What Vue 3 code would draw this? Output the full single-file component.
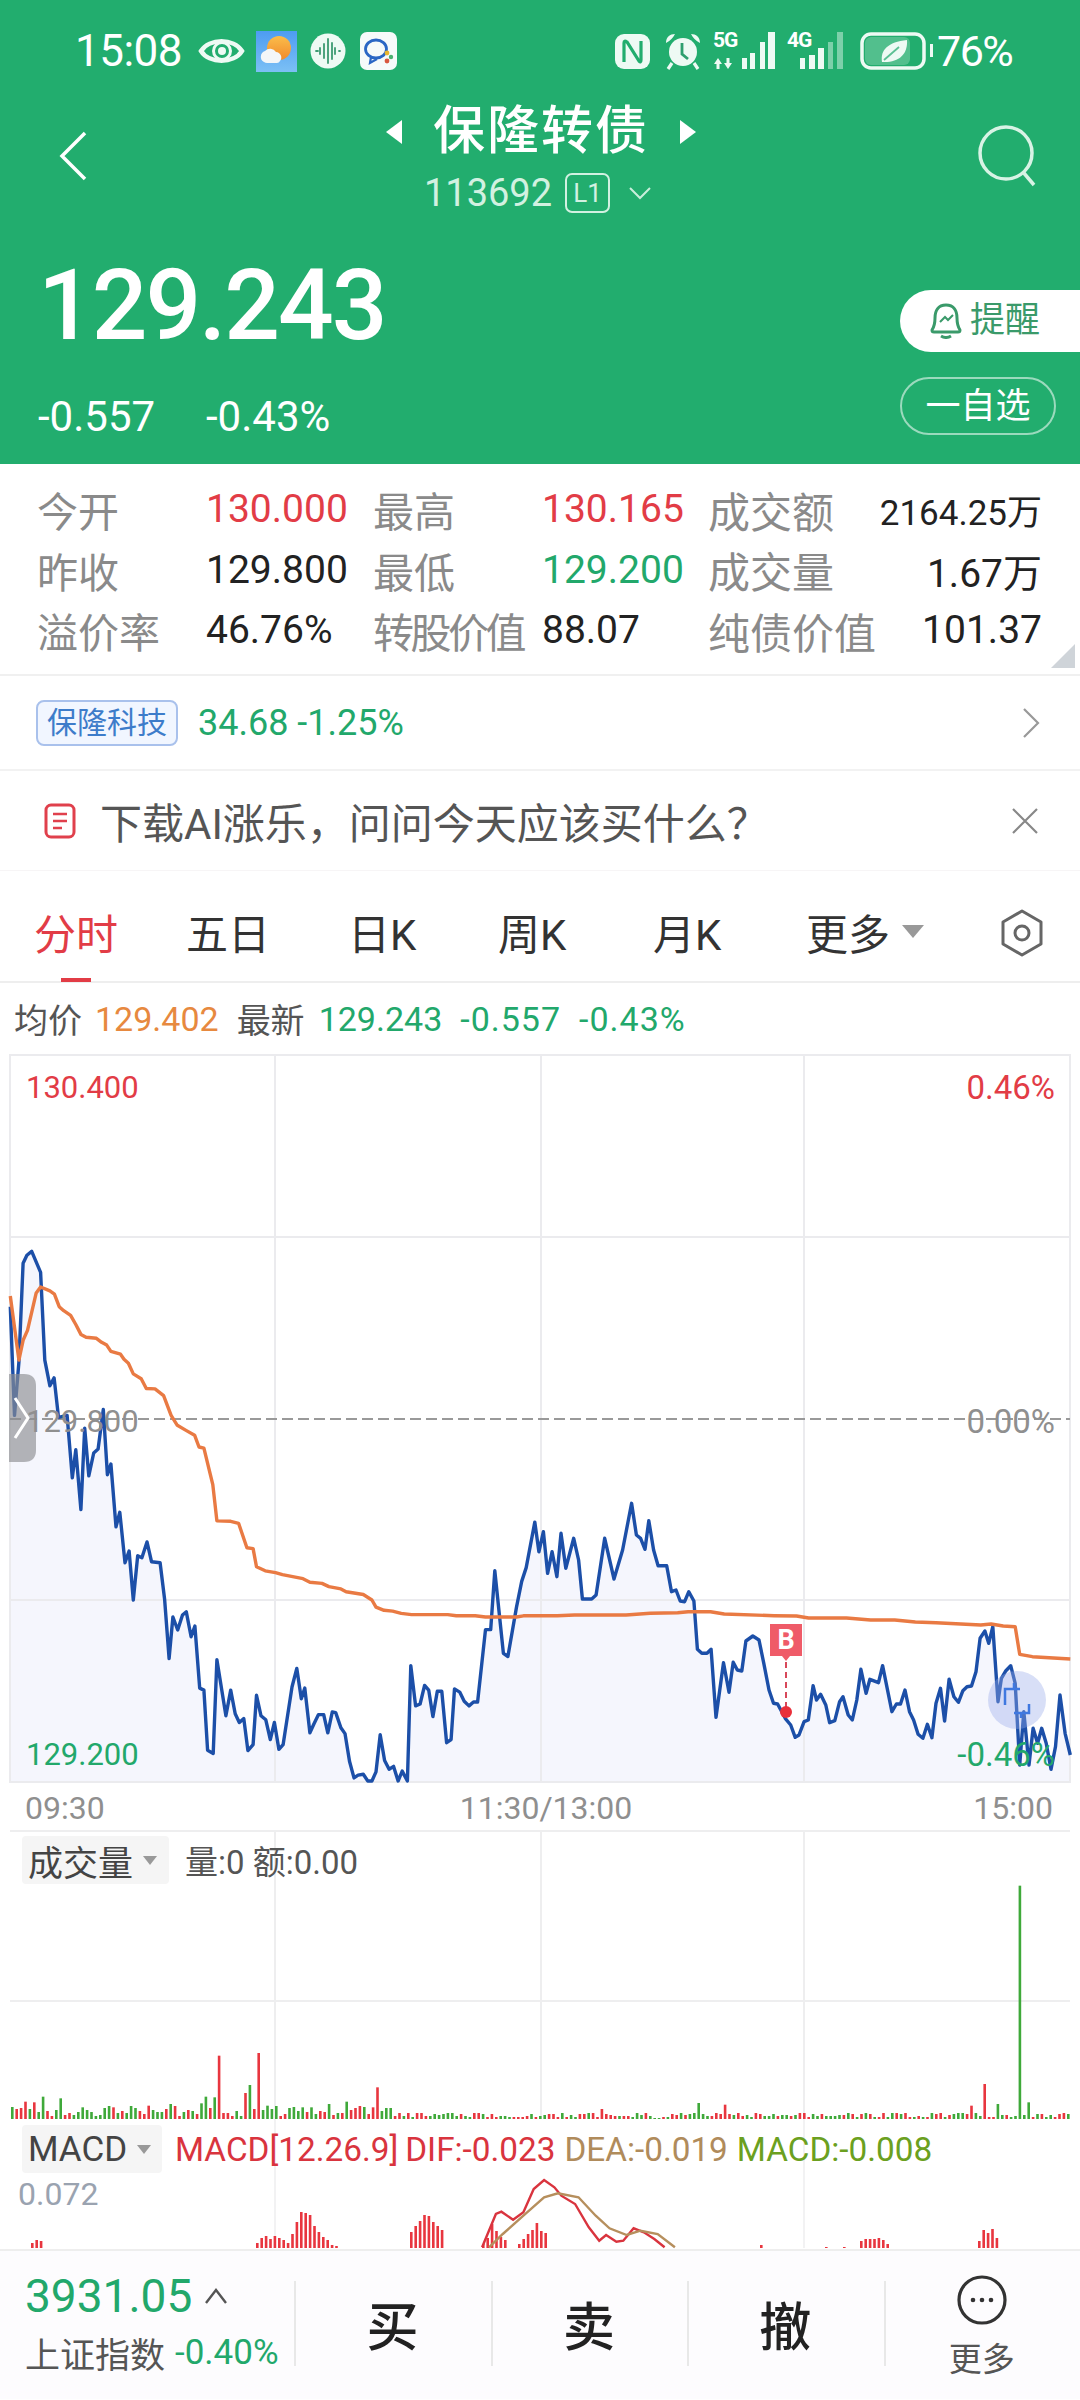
<script setup>
const blueA = [30,270,42,545,55,410,67,160,78,140,92,130,118,183,130,405,145,470,157,450,170,550,195,545,210,703,220,632,235,783,246,577,258,698,272,640,285,630,300,530,312,695,322,668,337,827,348,790,363,918,375,888,387,1012,400,900,412,905,427,865,440,915,465,918,478,1010,491,1160,502,1055,516,1088,530,1050,541,1042,555,1105,566,1078,580,1235,592,1240,603,1392,619,1400,630,1163,656,1305,670,1240,683,1300,695,1322,708,1312,720,1393,735,1378,745,1253,758,1305,772,1315,785,1365,797,1322,810,1390,822,1378,848,1232,862,1185,875,1262,885,1235,900,1348,912,1325,925,1302,940,1302,952,1348,965,1295,975,1297,990,1335,1002,1350,1015,1420,1028,1462,1040,1455,1055,1453,1068,1470,1080,1470,1092,1447,1104,1353,1117,1418,1130,1440,1143,1433,1156,1470,1168,1445,1183,1470,1193,1178,1207,1280,1220,1275,1233,1228,1245,1240,1257,1307,1270,1243,1283,1243,1297,1373,1310,1365,1320,1237,1335,1245,1348,1268,1362,1280,1375,1270,1387,1270,1410,1087,1425,1087,1437,938,1462,1147,1475,1155,1500,1030,1515,965,1528,930,1553,815,1565,890]
const blueB = [10,395,22,520,35,455,49,530,61,400,75,505,98,415,112,480,123,597,150,597,163,585,188,415,215,537,240,450,266,310,280,405,292,415,305,448,316,362,330,450,343,497,368,497,382,575,395,570,407,603,420,605,432,575,447,603,457,748,470,760,485,760,497,748,511,952,533,788,549,877,561,787,573,810,586,813,598,723,618,708,636,720,650,790,665,870,678,910,690,912,712,955,728,975,741,1012,752,1005,767,965,779,960,793,857,803,900,815,883,830,915,841,968,856,962,870,905,880,890,895,945,907,960,920,900,932,808,947,880,958,838,983,848,995,797,1022,935,1035,912,1047,912,1060,870,1073,935,1085,960,1098,1003,1112,1015,1125,973,1138,1013,1150,910,1163,865,1175,963,1188,838,1202,890,1215,907,1228,872,1240,860,1253,858,1266,815,1278,715,1292,693,1303,730,1315,680,1330,905,1340,835,1353,812,1367,797,1380,850,1393,1095,1405,935,1420,1095,1432,985,1445,1030,1457,985,1470,1030,1484,1108,1497,1040,1510,885,1525,1000,1540,1065]
const orangeA = [30,243,55,405,67,355,80,330,105,235,118,220,145,230,158,238,172,270,185,280,205,292,220,315,235,340,250,347,280,350,295,360,310,367,322,383,350,390,360,403,373,413,387,440,410,452,425,477,450,478,475,495,497,545,515,570,540,583,565,595,578,625,592,628,618,720,630,812,670,813,693,818,717,880,735,882,745,928,770,938,800,943,820,948,880,958,900,967,935,970,955,978,990,984,1005,991,1055,998,1080,1012,1092,1030,1115,1038,1140,1040,1165,1046,1195,1049,1300,1049,1325,1052,1380,1052,1410,1055,1500,1055,1520,1052,1568,1052]
const orangeB = [50,647,100,645,250,645,320,640,400,638,430,635,495,635,535,642,680,647,745,648,780,654,890,654,960,660,1030,660,1090,666,1150,668,1280,675,1310,672,1345,678,1380,680,1393,763,1430,770,1540,777]

function convert(list, sx, ox, sy, oy) {
  const out = []
  for (let i = 0; i < list.length; i += 2) {
    out.push([+(list[i] / sx + ox).toFixed(1), +(list[i + 1] / sy + oy).toFixed(1)])
  }
  return out
}
const toStr = (pts) => pts.map((p) => p.join(',')).join(' ')
const bluePts = [...convert(blueA, 2.904, 0, 2.53, 1200), ...convert(blueB, 2.904, 540, 3, 1400)]
const orangePts = [...convert(orangeA, 2.904, 0, 2.53, 1200), ...convert(orangeB, 2.904, 540, 3, 1400)]
const blueLine = toStr(bluePts)
const orangeLine = toStr(orangePts)
const blueArea = `10,1781 ${blueLine} 1070,1781`

const vols = (() => {
  const spikes = { 315:[710,'r'],373:[702,'r'],360:[798,'g'],353:[822,'r'],545:[805,'r'],1430:[795,'r'],1480:[200,'g'],1448:[855,'g'],1493:[850,'g'],950:[852,'g'],1013:[852,'g'],1050:[857,'r'],872:[870,'r'],85:[838,'g'],58:[833,'g'],32:[848,'r'],45:[850,'r'],300:[833,'g'],308:[835,'g'],290:[853,'g'],245:[855,'g'],213:[860,'r'],160:[865,'r'],117:[865,'g'],385:[860,'g'],437:[865,'g'],450:[865,'g'],476:[855,'g'],500:[848,'g'],540:[865,'r'],558:[867,'g'],1410:[860,'r'] }
  const keys = Object.keys(spikes).map((k) => [k / 1.452, spikes[k]])
  const bars = []
  let seed = 17
  for (let i = 0; i < 241; i++) {
    seed = (seed * 73 + 41) % 1009
    const x = 11 + i * 4.4
    const left = x < 390
    let h = left ? 3 + (seed % 11) : 2 + (seed % 5)
    let c = (seed >> 2) % 2 ? 'r' : 'g'
    const hit = keys.find((k) => Math.abs(k[0] - x) < 2.2)
    if (hit) { h = 2120 - (hit[1][0] / 3 + 1820); c = hit[1][1] }
    if (x > 650 && x < 660) h = 1
    bars.push({ x, y: 2120 - h, h, c: c === 'r' ? '#e8363f' : '#3fa93a' })
  }
  return bars
})()

const macdGroups = [
  [31, [5, 8, 7]],
  [256, [5, 10, 12, 9, 12, 10, 8, 5, 14, 26, 36, 35, 33, 22, 16, 11, 8, 3, 2]],
  [410, [16, 22, 27, 33, 32, 26, 22, 18]],
  [482, [4, 10, 24, 17, 11, 8]],
  [518, [4, 9, 14, 18, 25, 17, 15]],
  [860, [7, 9, 9, 9, 10, 8, 4]],
  [978, [7, 18, 15, 19, 10]],
  [760, [3]], [825, [1]], [843, [1]]
]
const macdBars = macdGroups.flatMap(([x, hs]) => hs.map((h, i) => ({ x: x + i * 4.4, h })))
const dif = toStr(convert([700,445,720,345,728,338,745,362,760,340,775,270,790,243,805,265,815,290,835,315,855,385,870,425,880,408,895,428,905,425,920,388,935,400,950,420,965,445], 1.452, 0, 3, 2100))
const dea = toStr(convert([710,445,730,405,760,350,790,295,810,283,840,295,865,350,885,388,910,408,930,395,955,405,980,445], 1.452, 0, 3, 2100))

const stats = [
  ['今开', '130.000', 'red', '最高', '130.165', 'red', '成交额', '2164.25万', 'small'],
  ['昨收', '129.800', '', '最低', '129.200', 'green', '成交量', '1.67万', ''],
  ['溢价率', '46.76%', '', '转股价值', '88.07', '', '纯债价值', '101.37', '']
]
const tabs = [
  { t: '五日', w: 162 }, { t: '日K', w: 150 }, { t: '周K', w: 155 }, { t: '月K', w: 153 }
]
</script>

<template>
  <div class="app">
    <header class="head">
      <div class="status">
        <span class="clock">15:08</span>
        <svg class="eye" width="47" height="30" viewBox="0 0 47 30"><path d="M3 15C11 2 36 2 44 15C36 28 11 28 3 15Z" fill="none" stroke="#eefaf4" stroke-width="4.5"/><circle cx="24" cy="15" r="8.5" fill="none" stroke="#eefaf4" stroke-width="3"/><circle cx="24" cy="15" r="4" fill="#eefaf4"/></svg>
        <svg class="tile1" width="41" height="41" viewBox="0 0 41 41"><defs><linearGradient id="sky" x1="0" y1="0" x2="0" y2="1"><stop offset="0" stop-color="#4d9cf2"/><stop offset="1" stop-color="#7cc0f5"/></linearGradient><linearGradient id="sun" x1="0" y1="0" x2="0" y2="1"><stop offset="0" stop-color="#fbbd4a"/><stop offset="1" stop-color="#f08a2c"/></linearGradient></defs><rect width="41" height="41" fill="url(#sky)"/><circle cx="23" cy="17" r="12" fill="url(#sun)"/><path d="M8 31a6 6 0 0 1 1-11a7 7 0 0 1 11 1a5.500 5.500 0 0 1 4 9a4 4 0 0 1-3 2H12a5 5 0 0 1-4-1Z" fill="#f3f6f8"/></svg>
        <svg class="tile2" width="36" height="36" viewBox="0 0 36 36"><circle cx="18" cy="18" r="17.500" fill="#eefaf4"/><path d="M6 18h2M10 15v6M14 11v14M18 6v24M22 10v16M25 15v6M29 18h1" stroke="#3c9a72" stroke-width="1.800" stroke-linecap="round"/></svg>
        <svg class="tile3" width="37" height="38" viewBox="0 0 37 38"><rect width="37" height="38" rx="7" fill="#f6fafa"/><ellipse cx="16" cy="17" rx="10.500" ry="9" fill="none" stroke="#2a66c4" stroke-width="2.800"/><path d="M11 25l-1 6l7-4" fill="none" stroke="#2a66c4" stroke-width="2.200"/><circle cx="27" cy="21" r="2.400" fill="#e8b630"/><circle cx="31" cy="25" r="2.200" fill="#4bb071"/><circle cx="27" cy="29" r="2.400" fill="#d9573f"/></svg>
        <div class="spacer"></div>
        <svg width="35" height="35" viewBox="0 0 35 35"><rect width="35" height="35" rx="9" fill="#eefaf4"/><path d="M9 28V9Q9 6 12 8L24 27Q26 29 26 26V7" fill="none" stroke="#22ad6e" stroke-width="3.200"/></svg>
        <svg class="alarm" width="38" height="38" viewBox="0 0 38 38"><circle cx="19" cy="20" r="14" fill="#eefaf4"/><path d="M18 11v11l6 5" fill="none" stroke="#2f9f6f" stroke-width="2.800"/><path d="M2 11C2 5 6 2 11 2Q8 8 2 11ZM36 11C36 5 32 2 27 2Q30 8 36 11Z" fill="#eefaf4"/><path d="M8 31l-4 6M30 31l4 6" stroke="#eefaf4" stroke-width="3.200"/></svg>
        <div class="sim s5">
          <span class="gen">5G</span>
          <svg width="62" height="38" viewBox="0 0 62 38"><path d="M1 32L5 26L9 32H6.500V37H3.500V32ZM11 31H13.500V26H16.500V31H19L15 37Z" fill="#eefaf4"/><rect x="29" y="26" width="5" height="11" fill="#eefaf4"/><rect x="37" y="21" width="5" height="16" fill="#eefaf4"/><rect x="47" y="10" width="5" height="27" fill="#eefaf4"/><rect x="55" y="0" width="7" height="37" fill="#eefaf4"/></svg>
        </div>
        <div class="sim s4">
          <span class="gen">4G</span>
          <svg width="56" height="38" viewBox="0 0 56 38"><rect x="13" y="26" width="5" height="11" fill="#eefaf4"/><rect x="22" y="23" width="6" height="14" fill="#eefaf4"/><rect x="31" y="16" width="6" height="21" fill="#eefaf4"/><rect x="41" y="10" width="5" height="27" fill="#eefaf4" opacity=".45"/><rect x="50" y="0" width="6" height="37" fill="#eefaf4" opacity=".45"/></svg>
        </div>
        <svg class="batt" width="73" height="38" viewBox="0 0 73 38"><rect x="2" y="2" width="62" height="34" rx="9" fill="none" stroke="#eefaf4" stroke-width="3.500"/><rect x="5" y="5" width="45" height="28" rx="6" fill="rgba(255,255,255,.22)"/><path d="M22 30C20 18 28 10 47 8C48 23 38 31 22 30Z" fill="#eefaf4"/><path d="M24 28L39 15" stroke="#5cc093" stroke-width="1.800"/><rect x="70" y="12" width="3" height="13" fill="#eefaf4"/></svg>
        <span class="pct">76%</span>
      </div>

      <div class="nav">
        <svg class="back" width="32" height="52" viewBox="0 0 32 52"><path d="M28 3L5 26L28 49" fill="none" stroke="#fff" stroke-width="3.500"/></svg>
        <div class="nav-mid">
          <div class="title-row">
            <svg width="18" height="26" viewBox="0 0 18 26"><path d="M17 1V25L1 13Z" fill="#fff"/></svg>
            <span class="title">保隆转债</span>
            <svg width="18" height="26" viewBox="0 0 18 26"><path d="M1 1V25L17 13Z" fill="#fff"/></svg>
          </div>
          <div class="code-row">
            <span class="code">113692</span>
            <span class="lv">L1</span>
            <svg width="24" height="14" viewBox="0 0 24 14"><path d="M2 2L12 12L22 2" fill="none" stroke="#c9eedb" stroke-width="2"/></svg>
          </div>
        </div>
        <svg class="search" width="62" height="62" viewBox="0 0 62 62"><circle cx="29" cy="28" r="26" fill="none" stroke="#d8f3e5" stroke-width="3.500"/><path d="M46 47L57 60" stroke="#d8f3e5" stroke-width="3.500"/></svg>
      </div>

      <div class="quote">
        <div class="quote-l">
          <div class="price">129.243</div>
          <div class="chg"><span>-0.557</span><span>-0.43%</span></div>
        </div>
        <div class="quote-r">
          <div class="pill-a">
            <svg width="32" height="36" viewBox="0 0 32 36"><path d="M16 2C8 2 5 8 5 15C5 21 4 24 2 27Q2 29 4 29H28Q30 29 30 27C28 24 27 21 27 15C27 8 24 2 16 2Z" fill="none" stroke="#3a9a6a" stroke-width="3" stroke-linejoin="round"/><path d="M11 33Q16 36 21 33" fill="none" stroke="#3a9a6a" stroke-width="3"/><path d="M10 19l5-5l3 3l5-5" fill="none" stroke="#3a9a6a" stroke-width="2"/></svg>
            <span>提醒</span>
          </div>
          <div class="pill-b">一自选</div>
        </div>
      </div>
    </header>

    <section class="stats">
      <template v-for="(r, i) in stats" :key="i">
        <span class="lb">{{ r[0] }}</span><span class="vl" :class="r[2]">{{ r[1] }}</span>
        <span class="lb" :class="{ tight: r[3].length === 4 }">{{ r[3] }}</span><span class="vl" :class="r[5]">{{ r[4] }}</span>
        <span class="lb wide">{{ r[6] }}</span><span class="vl end" :class="r[8]">{{ r[7] }}</span>
      </template>
      <i class="corner"></i>
    </section>

    <section class="related">
      <span class="tag">保隆科技</span>
      <span class="rel-val">34.68 -1.25%</span>
      <svg class="r-arrow" width="18" height="32" viewBox="0 0 18 32"><path d="M2 2L16 16L2 30" fill="none" stroke="#999" stroke-width="2.200"/></svg>
    </section>

    <section class="ai">
      <svg width="32" height="36" viewBox="0 0 32 36"><rect x="2" y="2" width="28" height="32" rx="5" fill="none" stroke="#e0404c" stroke-width="3"/><path d="M9 11H23M9 18H23M9 25H18" stroke="#e0404c" stroke-width="2.600"/></svg>
      <span class="ai-text">下载AI涨乐，问问今天应该买什么？</span>
      <svg class="ai-x" width="30" height="30" viewBox="0 0 30 30"><path d="M3 3L27 27M27 3L3 27" stroke="#888" stroke-width="2.200"/></svg>
    </section>

    <nav class="tabs">
      <span class="tab active">分时</span>
      <i class="tab-bar"></i>
      <span v-for="t in tabs" :key="t.t" class="tab" :style="{ width: t.w + 'px' }">{{ t.t }}</span>
      <span class="tab more">更多<b></b></span>
      <svg class="hex" width="44" height="48" viewBox="0 0 44 48"><path d="M22 2L41 13V35L22 46L3 35V13Z" fill="none" stroke="#666" stroke-width="3" stroke-linejoin="round"/><circle cx="22" cy="24" r="7" fill="none" stroke="#666" stroke-width="3"/></svg>
    </nav>

    <div class="avg">
      <span class="g1">均价</span><span class="or">129.402</span>
      <span class="g2">最新</span><span class="gr">129.243</span><span class="gr sp">-0.557</span><span class="gr sp">-0.43%</span>
    </div>

    <div class="main-chart">
      <svg class="fill" width="1080" height="734" viewBox="0 1052 1080 734">
        <polygon :points="blueArea" fill="#f5f6fd"/>
        <g stroke="#ebebee" stroke-width="2" fill="none">
          <rect x="10" y="1055" width="1060" height="727"/>
          <path d="M10 1237H1070M10 1600H1070M275 1055V1782M541 1055V1782M804 1055V1782"/>
        </g>
        <path d="M10 1419H1070" stroke="#999" stroke-width="2" stroke-dasharray="11 5" fill="none"/>
        <polyline :points="blueLine" fill="none" stroke="#1c4fa8" stroke-width="3.400" stroke-linejoin="round"/>
        <polyline :points="orangeLine" fill="none" stroke="#e97a43" stroke-width="3.400" stroke-linejoin="round"/>
        <circle cx="1017" cy="1700" r="29" fill="#98ace9" fill-opacity=".38"/>
        <path d="M1005 1705V1689H1020M1014 1689V1683M1029 1704V1713H1014M1021 1713V1718" fill="none" stroke="#3f78e0" stroke-width="2.500"/>
        <path d="M770 1624H802V1656H790L786 1661L782 1656H770Z" fill="#ef5b68"/>
        <path d="M786 1662V1710" stroke="#d8485a" stroke-width="2" stroke-dasharray="6 4"/>
        <circle cx="786" cy="1712" r="6" fill="#e92f3a"/>
        <path d="M9 1374H24Q36 1374 36 1386V1450Q36 1462 24 1462H9Z" fill="#8c8d92" fill-opacity=".65"/>
        <path d="M15 1398L28 1418L15 1438" fill="none" stroke="#fff" stroke-width="3"/>
      </svg>
      <span class="mark">B</span>
      <span class="cl red tl">130.400</span>
      <span class="cl red tr">0.46%</span>
      <span class="cl gray ml">129.800</span>
      <span class="cl gray mr">0.00%</span>
      <span class="cl green bl">129.200</span>
      <span class="cl green br">-0.46%</span>
    </div>

    <div class="times"><span>09:30</span><span class="t-mid">11:30/13:00</span><span>15:00</span></div>

    <div class="vol">
      <svg class="fill" width="1080" height="289" viewBox="0 1831 1080 289">
        <g stroke="#eeeeef" stroke-width="2" fill="none">
          <path d="M10 1832H1070M10 2002H1070M275 1831V2120M541 1831V2120M804 1831V2120"/>
        </g>
        <rect v-for="(b, i) in vols" :key="i" :x="b.x" :y="b.y" width="2.600" :height="b.h" :fill="b.c"/>
      </svg>
      <div class="ind-row vr">
        <span class="ind">成交量<b></b></span>
        <span class="vol-t">量:0 额:0.00</span>
      </div>
    </div>

    <div class="macd">
      <svg class="fill" width="1080" height="130" viewBox="0 2120 1080 130">
        <path d="M275 2120V2249M804 2120V2249" stroke="#eeeeef" stroke-width="1.500"/>
        <rect v-for="(b, i) in macdBars" :key="i" :x="b.x" :y="2249 - b.h" width="2.600" :height="b.h" fill="#e8363f"/>
        <polyline :points="dif" fill="none" stroke="#d9343e" stroke-width="2.400"/>
        <polyline :points="dea" fill="none" stroke="#b68f5d" stroke-width="2.400"/>
      </svg>
      <div class="ind-row mr2">
        <span class="ind ind-m">MACD<b></b></span>
        <span class="m1">MACD[12.26.9]</span>
        <span class="m1 m1b">DIF:-0.023</span>
        <span class="m2">DEA:-0.019</span>
        <span class="m3">MACD:-0.008</span>
      </div>
      <span class="scale">0.072</span>
    </div>

    <footer class="foot">
      <div class="idx">
        <div class="idx-top"><span class="idx-num">3931.05</span><svg width="24" height="16" viewBox="0 0 24 16"><path d="M2 15L12 2L22 15" fill="none" stroke="#555" stroke-width="2.400"/></svg></div>
        <div class="idx-bot"><span class="idx-name">上证指数</span><span class="idx-pct">-0.40%</span></div>
      </div>
      <div class="act">买</div>
      <div class="act">卖</div>
      <div class="act">撤</div>
      <div class="act act-more">
        <svg width="50" height="50" viewBox="0 0 50 50"><circle cx="25" cy="25" r="23" fill="none" stroke="#333" stroke-width="3.200"/><circle cx="16" cy="25" r="2.300" fill="#333"/><circle cx="25" cy="25" r="2.300" fill="#333"/><circle cx="34" cy="25" r="2.300" fill="#333"/></svg>
        <span>更多</span>
      </div>
    </footer>
  </div>
</template>

<style scoped>
.app {
  width: 1080px;
  height: 2400px;
  overflow: hidden;
  background: #fff;
  color: #222;
  font-family: Roboto, "Noto Sans CJK SC", sans-serif;
}
.head { height: 464px; background: #22ad6e; color: #fff; }
.status { height: 102px; display: flex; align-items: center; padding: 0 68px 0 75px; box-sizing: border-box; }
.clock { width: 110px; font-size: 44px; letter-spacing: -.5px; white-space: nowrap; }
.eye { margin-left: 13px; }
.tile1 { margin-left: 11px; }
.tile2 { margin-left: 13px; }
.tile3 { margin-left: 14px; }
.spacer { flex: 1; }
.alarm { margin-left: 14px; }
.sim { position: relative; height: 38px; }
.sim svg { display: block; }
.s5 { margin-left: 11px; width: 62px; }
.s4 { margin-left: 12px; width: 56px; }
.gen { position: absolute; left: 0; top: -2px; font-size: 21px; line-height: 20px; font-weight: 700; letter-spacing: -1px; }
.batt { margin-left: 17px; }
.pct { margin-left: 4px; width: 75px; font-size: 43px; letter-spacing: -1.500px; white-space: nowrap; }

.nav { height: 118px; display: flex; align-items: flex-start; position: relative; padding: 0 41px 0 57px; }
.back { margin-top: 28px; }
.nav-mid { flex: 1; display: flex; flex-direction: column; align-items: center; padding-left: 16px; }
.title-row { display: flex; align-items: center; gap: 30px; height: 60px; }
.title { font-size: 52px; line-height: 60px; letter-spacing: 2px; font-weight: 500; }
.code-row { display: flex; align-items: center; height: 44px; margin-top: 9px; margin-left: -6px; }
.code { font-size: 38px; color: #d2f1e1; }
.lv { margin-left: 13px; width: 45px; height: 40px; line-height: 36px; text-align: center; box-sizing: border-box; border: 2px solid #d2f1e1; border-radius: 7px; font-size: 26px; color: #d2f1e1; }
.code-row svg { margin-left: 18px; }
.search { margin-top: 23px; }

.quote { display: flex; justify-content: space-between; height: 244px; }
.quote-l { padding-left: 38px; }
.price { margin-top: 37px; font-size: 98px; line-height: 98px; letter-spacing: -2px; font-weight: 500; }
.chg { margin-top: 42px; display: flex; font-size: 42px; line-height: 40px; }
.chg span:first-child { width: 168px; }
.quote-r { width: 180px; padding-top: 70px; }
.pill-a { height: 62px; display: flex; align-items: center; padding-left: 30px; gap: 8px; background: #fff; border-radius: 31px 0 0 31px; color: #3a9a6a; font-size: 35px; line-height: 56px; box-sizing: border-box; }
.pill-b { margin-top: 25px; width: 156px; height: 58px; line-height: 56px; box-sizing: border-box; text-align: center; border: 2px solid rgba(255,255,255,.55); border-radius: 29px; font-size: 35px; }

.stats { position: relative; height: 212px; box-sizing: border-box; padding: 15px 38px 0 37px; display: grid; grid-template-columns: 169px 167px 169px 166px 150px 1fr; grid-auto-rows: 60.5px; align-items: center; border-bottom: 2px solid #f0f0f0; }
.lb { font-size: 41px; color: #8a8a8a; white-space: nowrap; }
.lb.wide { font-size: 42px; }
.lb.tight { letter-spacing: -3.500px; }
.vl { font-size: 39px; color: #222; white-space: nowrap; }
.vl.end { text-align: right; }
.vl.small { font-size: 35px; }
.red { color: #e23c46; }
.green { color: #22a86b; }
.gray { color: #8f8f8f; }
.corner { position: absolute; right: 5px; bottom: 6px; width: 0; height: 0; border-style: solid; border-width: 0 0 24px 24px; border-color: transparent transparent #cfd4d9 transparent; }

.related { height: 95px; display: flex; align-items: center; padding: 0 40px 0 36px; box-sizing: border-box; border-bottom: 2px solid #f2f2f2; }
.tag { width: 142px; height: 46px; line-height: 42px; box-sizing: border-box; text-align: center; border: 2px solid #a9c1ec; border-radius: 8px; background: #f1f6ff; color: #3d7cca; font-size: 30px; }
.rel-val { margin-left: 20px; color: #22a86b; font-size: 36px; }
.r-arrow { margin-left: auto; }

.ai { height: 100px; display: flex; align-items: center; padding: 0 40px 0 44px; box-sizing: border-box; border-bottom: 1px solid #f7f5f6; }
.ai-text { margin-left: 24px; font-size: 42px; color: #555; white-space: nowrap; }
.ai-x { margin-left: auto; }

.tabs { height: 112px; display: flex; align-items: center; padding: 10px 0 0 34px; box-sizing: border-box; border-bottom: 2px solid #eee; position: relative; }
.tab { font-size: 42px; color: #333; white-space: nowrap; }
.tab.active { width: 152px; color: #e23c46; }
.tab-bar { position: absolute; left: 61px; bottom: -1px; width: 30px; height: 4px; background: #e23c46; }
.tab.more { display: flex; align-items: center; }
.tab.more b { margin-left: 12px; width: 0; height: 0; border-left: 11px solid transparent; border-right: 11px solid transparent; border-top: 13px solid #999; }
.hex { position: absolute; left: 1000px; top: 38px; }

.avg { height: 71px; display: flex; align-items: center; padding-left: 14px; font-size: 34px; }
.g1, .g2 { color: #555; }
.or { margin-left: 13px; color: #e7893f; }
.g2 { margin-left: 18px; }
.gr { margin-left: 14px; color: #22a86b; }
.gr.sp { margin-left: 18px; letter-spacing: 1px; }

.main-chart { position: relative; height: 726px; }
.fill { position: absolute; left: 0; top: -2px; }
.vol .fill, .macd .fill { top: 0; }
.mark { position: absolute; left: 770px; top: 569px; width: 32px; text-align: center; font-size: 27px; line-height: 34px; color: #fff; font-weight: 700; }
.cl { position: absolute; font-size: 31px; line-height: 38px; white-space: nowrap; }
.tl { left: 26px; top: 15px; }
.tr { right: 25px; top: 15px; font-size: 33px; }
.ml { left: 26px; top: 349px; }
.mr { right: 25px; top: 349px; font-size: 33px; }
.bl { left: 26px; top: 682px; }
.br { right: 25px; top: 682px; font-size: 33px; }

.times { height: 50px; display: flex; justify-content: space-between; align-items: center; padding: 5px 27px 0 25px; font-size: 32px; color: #8f8f8f; box-sizing: border-box; }
.t-mid { margin-left: 14px; }

.vol { position: relative; height: 289px; }
.macd { position: relative; height: 130px; }
.ind-row { position: absolute; left: 22px; display: flex; align-items: center; white-space: nowrap; }
.vr { top: 6px; }
.mr2 { top: 6px; }
.ind { width: 147px; height: 48px; display: flex; align-items: center; padding-left: 6px; box-sizing: border-box; background: #f5f5f5; border-radius: 4px; font-size: 35px; color: #444; }
.ind-m { width: 140px; }
.ind b { margin-left: 10px; width: 0; height: 0; border-left: 7px solid transparent; border-right: 7px solid transparent; border-top: 9px solid #999; }
.vol-t { margin-left: 16px; font-size: 33px; color: #555; }
.m1, .m2, .m3 { font-size: 33.300px; margin-left: 9px; }
.m1 { color: #d9343e; }
.m1b { margin-left: 7px; }
.m2 { color: #b08b5b; }
.m3 { color: #6ba020; }
.mr2 .m1:nth-child(2) { margin-left: 13px; }
.scale { position: absolute; left: 18px; top: 56px; font-size: 32px; line-height: 38px; color: #9aa3b0; }

.foot { height: 150px; display: flex; background: #fdfcfe; border-top: 2px solid #eee; box-sizing: border-box; position: relative; }
.idx { width: 295px; padding-left: 25px; box-sizing: border-box; }
.idx-top { display: flex; align-items: center; margin-top: 20px; height: 50px; }
.idx-num { font-size: 46px; color: #22a86b; }
.idx-top svg { margin-left: 12px; }
.idx-bot { display: flex; align-items: center; margin-top: 8px; height: 46px; }
.idx-name { font-size: 35px; color: #555; }
.idx-pct { margin-left: 10px; font-size: 35px; color: #22a86b; }
.act { position: relative; width: 197px; display: flex; align-items: center; justify-content: center; font-size: 52px; color: #222; font-weight: 500; padding-bottom: 3px; box-sizing: border-box; }
.act::before { content: ""; position: absolute; left: 0; top: 30px; height: 85px; width: 2px; background: #e8e8e8; }
.act-more { flex-direction: column; justify-content: flex-start; padding-top: 24px; }
.act-more span { margin-top: 17px; font-size: 33px; font-weight: 400; color: #555; line-height: 36px; }
</style>
